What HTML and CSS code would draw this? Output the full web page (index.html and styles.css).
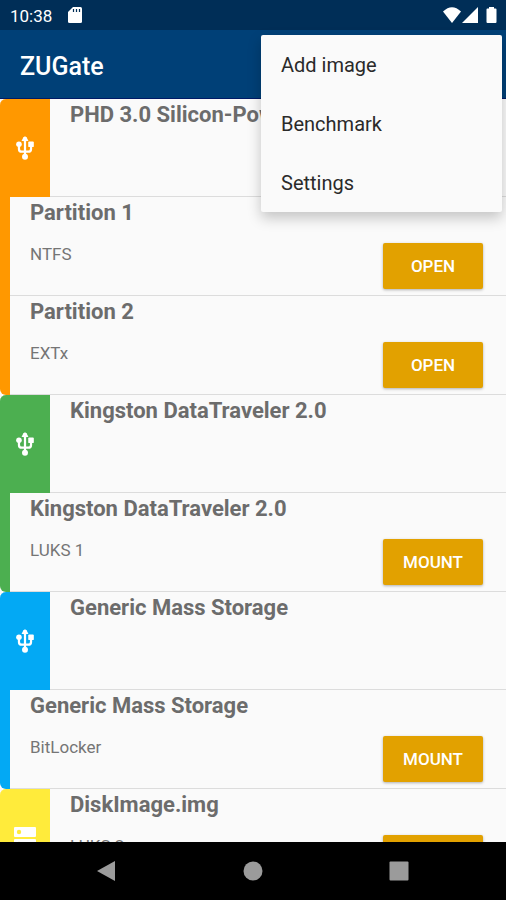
FILE: index.html
```
<!DOCTYPE html>
<html lang="en">
<head>
    <meta charset="utf-8">
    <meta name="viewport" content="width=device-width, initial-scale=1">
    <title>ZUGate</title>
    <link rel="stylesheet" href="styles.css">
</head>
<body>
    <svg class="symbols" aria-hidden="true">
        <symbol id="usb" viewBox="0 0 20 28">
            <path d="M10 4v20M3.500 10v5q0 3 3 3h7q3 0 3-3v-5" fill="none" stroke="#fff" stroke-width="2.400"/>
            <path d="M10 1l3.800 5.500h-7.600z" fill="#fff"/>
            <circle cx="10" cy="4.500" r="2.600" fill="#fff"/>
            <circle cx="3.500" cy="10" r="3" fill="#fff"/>
            <rect x="13.500" y="7" width="6" height="6" rx="1" fill="#fff"/>
            <circle cx="10" cy="23.500" r="3.200" fill="#fff"/>
        </symbol>
        <symbol id="disk" viewBox="0 0 24 24">
            <rect x="1" y="1" width="22" height="10" rx="1" fill="#fff"/>
            <rect x="1" y="13" width="22" height="10" rx="1" fill="#fff"/>
            <circle cx="6" cy="6" r="2.200" fill="#ffeb3b"/>
            <circle cx="6" cy="18" r="2.200" fill="#ffeb3b"/>
        </symbol>
    </svg>

    <div class="status-bar">
        <span class="clock">10:38</span>
        <svg class="sd-card" width="14" height="16" viewBox="0 0 14 16">
            <path d="M5 0h7.500Q14 0 14 1.500v13Q14 16 12.500 16h-11Q0 16 0 14.500V5z" fill="#fff"/>
            <path d="M5.500 2v3M8.500 2v3M11.500 2v3" stroke="#002e57" stroke-width="1.200"/>
        </svg>
        <svg class="signals" width="56" height="18" viewBox="0 0 56 18">
            <path d="M1 5.500Q10-3 19 5.500L10 17z" fill="#fff"/>
            <path d="M36 1v16H20z" fill="#fff"/>
            <path d="M47 1h5v1.500h1.500q1 0 1 1V16q0 1-1 1h-8q-1 0-1-1V3.500q0-1 1-1H47z" fill="#fff"/>
        </svg>
    </div>

    <header class="app-bar">
        <h1>ZUGate</h1>
    </header>

    <div class="menu" role="menu">
        <button type="button" role="menuitem">Add image</button>
        <button type="button" role="menuitem">Benchmark</button>
        <button type="button" role="menuitem">Settings</button>
    </div>

    <main class="devices">
        <section class="device orange">
            <div class="device-header">
                <div class="device-icon"><svg width="20" height="26"><use href="#usb"/></svg></div>
                <div class="info"><h2>PHD 3.0 Silicon-Power</h2></div>
            </div>
            <div class="partition">
                <div class="info"><h2>Partition 1</h2><p>NTFS</p></div>
                <button type="button" class="action">OPEN</button>
            </div>
            <div class="partition">
                <div class="info"><h2>Partition 2</h2><p>EXTx</p></div>
                <button type="button" class="action">OPEN</button>
            </div>
        </section>

        <section class="device green">
            <div class="device-header">
                <div class="device-icon"><svg width="20" height="26"><use href="#usb"/></svg></div>
                <div class="info"><h2>Kingston DataTraveler 2.0</h2></div>
            </div>
            <div class="partition">
                <div class="info"><h2>Kingston DataTraveler 2.0</h2><p>LUKS 1</p></div>
                <button type="button" class="action">MOUNT</button>
            </div>
        </section>

        <section class="device blue">
            <div class="device-header">
                <div class="device-icon"><svg width="20" height="26"><use href="#usb"/></svg></div>
                <div class="info"><h2>Generic Mass Storage</h2></div>
            </div>
            <div class="partition">
                <div class="info"><h2>Generic Mass Storage</h2><p>BitLocker</p></div>
                <button type="button" class="action">MOUNT</button>
            </div>
        </section>

        <section class="device yellow">
            <div class="device-header">
                <div class="device-icon"><svg width="24" height="24"><use href="#disk"/></svg></div>
                <div class="info"><h2>DiskImage.img</h2><p>LUKS 2</p></div>
                <button type="button" class="action">MOUNT</button>
            </div>
        </section>
    </main>

    <nav class="nav-bar">
        <button type="button" aria-label="Back">
            <svg width="20" height="22" viewBox="0 0 20 22"><path d="M18 1v20L0 11z" fill="#9b9b9b"/></svg>
        </button>
        <button type="button" aria-label="Home">
            <svg width="20" height="20" viewBox="0 0 20 20"><circle cx="10" cy="10" r="9.500" fill="#9b9b9b"/></svg>
        </button>
        <button type="button" aria-label="Recent apps">
            <svg width="20" height="20" viewBox="0 0 20 20"><rect x="0.500" y="0.500" width="19" height="19" rx="1" fill="#9b9b9b"/></svg>
        </button>
    </nav>
</body>
</html>
```
FILE: styles.css
```
* {
    margin: 0;
    padding: 0;
    box-sizing: border-box;
    font-family: Roboto, sans-serif;
}

body {
    position: relative;
    height: 100vh;
    display: flex;
    flex-direction: column;
    overflow: hidden;
    background: #fafafa;
}

button {
    border: none;
    cursor: pointer;
}

.symbols {
    position: absolute;
    width: 0;
    height: 0;
}

.status-bar {
    flex: none;
    display: flex;
    align-items: center;
    height: 30px;
    padding: 0 8px 0 10px;
    background: #002e57;
    color: #fff;
}

.clock {
    font-size: 17px;
    line-height: 30px;
    padding-top: 2px;
}

.sd-card {
    margin-left: 16px;
}

.signals {
    margin-left: auto;
}

.app-bar {
    flex: none;
    display: flex;
    align-items: center;
    height: 69px;
    padding: 4px 20px 0;
    background: #004077;
    border-bottom: 1px solid #001a66;
    color: #fff;
}

h1 {
    font-size: 25px;
    font-weight: 500;
}

.menu {
    position: absolute;
    z-index: 1;
    top: 35px;
    right: 4px;
    width: 241px;
    background: #fafafa;
    border-radius: 2px;
    box-shadow: 0 6px 14px rgba(0, 0, 0, 0.22);
}

.menu button {
    display: block;
    width: 100%;
    height: 59px;
    padding: 0 20px;
    background: none;
    color: #2a2a2a;
    font-size: 20px;
    text-align: left;
}

.devices {
    flex: 1;
    min-height: 0;
    overflow-y: auto;
    scrollbar-width: none;
}

.device {
    padding-left: 10px;
    border-radius: 6px 0 0 6px;
}

.device-header,
.partition {
    display: flex;
    background: #fafafa;
    border-bottom: 1px solid #dcdcdc;
}

.device-header {
    height: 98px;
    margin-left: -10px;
    border-radius: 6px 0 0 0;
}

.partition {
    height: 99px;
}

.device-icon {
    display: flex;
    align-items: center;
    justify-content: center;
    width: 50px;
    height: 98px;
    border-radius: 6px 0 0 0;
}

.orange,
.orange .device-icon {
    background: #ff9800;
}

.green,
.green .device-icon {
    background: #4caf50;
}

.blue,
.blue .device-icon {
    background: #03a9f4;
}

.yellow,
.yellow .device-icon {
    background: #ffeb3b;
}

.info {
    flex: 1;
    padding: 2px 20px;
}

h2 {
    color: #6c6c6c;
    font-size: 22px;
    font-weight: 700;
    line-height: 28px;
    white-space: nowrap;
}

.info p {
    margin-top: 16px;
    color: #757575;
    font-size: 17px;
    line-height: 22px;
}

.action {
    width: 100px;
    height: 46px;
    margin: 46px 23px 0 0;
    border-radius: 2px;
    background: #e2a100;
    box-shadow: 0 1px 3px rgba(0, 0, 0, 0.3);
    color: #fff;
    font-size: 17px;
    font-weight: 500;
}

.nav-bar {
    flex: none;
    display: grid;
    grid-template-columns: repeat(3, 1fr);
    height: 58px;
    padding: 0 34px;
    background: #000;
}

.nav-bar button {
    display: flex;
    align-items: center;
    justify-content: center;
    background: none;
}
```
